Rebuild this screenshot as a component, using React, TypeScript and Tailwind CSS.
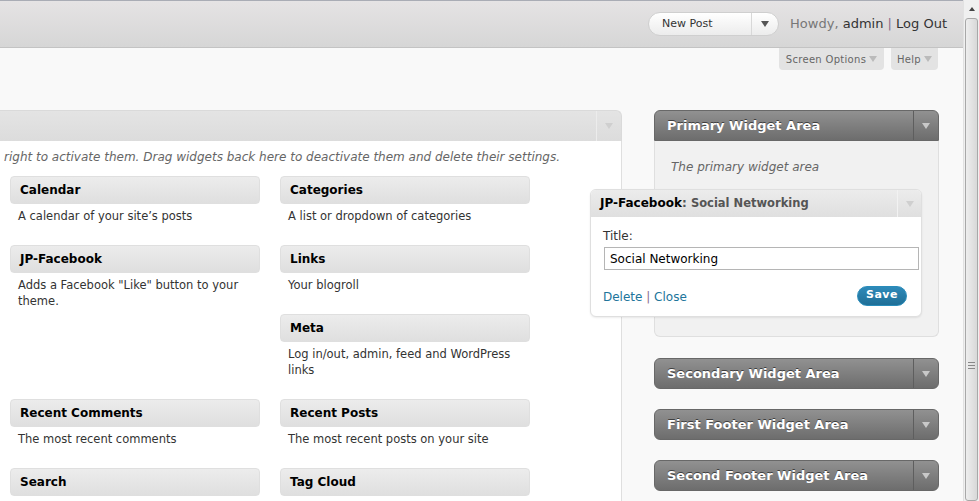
import React from "react";

const font = "font-['DejaVu_Sans','Verdana',sans-serif]";

function Arrow({ className = "" }: { className?: string }) {
  return (
    <svg viewBox="0 0 8 6" className={`w-[8px] h-[6px] ${className}`} fill="currentColor">
      <path d="M0 0h8L4 6z" />
    </svg>
  );
}

function Widget({ title, desc }: { title: string; desc?: string }) {
  return (
    <div className="w-[250px] mb-[21px]">
      <div className="h-[28px] rounded-[4px] border border-[#dfdfdf] bg-gradient-to-b from-[#ececec] to-[#dfdfdf] flex items-center pl-[9px] text-[12px] font-bold text-black">
        {title}
      </div>
      {desc && <p className="pt-[4px] pl-[8px] pr-[4px] text-[11.5px] leading-[16px] text-[#333]">{desc}</p>}
    </div>
  );
}

function DarkArea({ title, open = false }: { title: string; open?: boolean }) {
  return (
    <div
      className={`h-[31px] shrink-0 flex items-center bg-gradient-to-b from-[#919191] to-[#6d6d6d] border border-[#686868] ${
        open ? "rounded-t-[6px]" : "rounded-[6px]"
      }`}
    >
      <span className="flex-1 pl-[12px] text-[13px] font-bold text-white [text-shadow:0_-1px_0_#3f3f3f]">{title}</span>
      <span className="w-[25px] h-full border-l border-[#5e5e5e] flex items-center justify-center text-[#c8c8c8]">
        <Arrow />
      </span>
    </div>
  );
}

export default function App() {
  return (
    <div className={`relative flex w-[979px] h-[501px] overflow-hidden bg-[#f9f9f9] ${font}`}>
      <div className="flex-1 min-w-0 flex flex-col">
        {/* admin header */}
        <div className="h-[48px] shrink-0 border-t border-[#a9acb5] border-b border-b-[#c3c3c3] bg-gradient-to-b from-[#e5e3e4] to-[#d6d6d6] flex items-center justify-end pr-[16px]">
          <div className="h-[24px] w-[131px] rounded-full border border-[#cfcfcf] bg-gradient-to-b from-white to-[#ececec] flex items-center">
            <span className="flex-1 pl-[13px] text-[11px] text-[#333]">New Post</span>
            <span className="w-[27px] h-full border-l border-[#d8d8d8] flex items-center justify-center text-[#555]">
              <Arrow />
            </span>
          </div>
          <div className="ml-[11px] text-[13px] text-[#333]">
            <span className="text-[#777]">Howdy, </span>admin <span className="text-[#8a6b8a]">|</span> Log Out
          </div>
        </div>

        {/* screen options / help tabs */}
        <div className="shrink-0 flex justify-end gap-[7px] pr-[25px]">
          <div className="h-[22px] w-[105px] rounded-b-[4px] bg-[#e3e3e3] flex items-center justify-center gap-[3px] text-[10px] text-[#666] tracking-[0.3px]">
            Screen Options <Arrow className="text-[#bbb]" />
          </div>
          <div className="h-[22px] w-[47px] rounded-b-[4px] bg-[#e3e3e3] flex items-center justify-center gap-[3px] text-[10px] text-[#666] tracking-[0.3px]">
            Help <Arrow className="text-[#bbb]" />
          </div>
        </div>

        <div className="flex mt-[40px] flex-1 min-h-0">
          {/* available widgets */}
          <div className="w-[622px] shrink-0 flex flex-col">
            <div className="h-[31px] shrink-0 rounded-tr-[6px] border-t border-r border-[#dadada] bg-gradient-to-b from-[#e4e4e4] to-[#dcdcdc] flex justify-end">
              <span className="w-[25px] h-full border-l border-[#ececec] flex items-center justify-center text-[#cfcfcf]">
                <Arrow />
              </span>
            </div>
            <div className="flex-1 min-h-0 overflow-hidden bg-white border-r border-[#dfdfdf]">
              <p className="pt-[8px] pl-[4px] text-[12px] leading-[16px] italic text-[#666]">
                right to activate them. Drag widgets back here to deactivate them and delete their settings.
              </p>
              <div className="mt-[11px] pl-[10px] flex flex-col">
                <div className="flex gap-[20px]">
                  <Widget title="Calendar" desc="A calendar of your site’s posts" />
                  <Widget title="Categories" desc="A list or dropdown of categories" />
                </div>
                <div className="flex gap-[20px]">
                  <Widget title="JP-Facebook" desc={'Adds a Facebook "Like" button to your theme.'} />
                  <div className="flex flex-col">
                    <Widget title="Links" desc="Your blogroll" />
                    <Widget title="Meta" desc="Log in/out, admin, feed and WordPress links" />
                  </div>
                </div>
                <div className="flex gap-[20px]">
                  <Widget title="Recent Comments" desc="The most recent comments" />
                  <Widget title="Recent Posts" desc="The most recent posts on your site" />
                </div>
                <div className="flex gap-[20px]">
                  <Widget title="Search" />
                  <Widget title="Tag Cloud" />
                </div>
              </div>
            </div>
          </div>

          {/* sidebars */}
          <div className="ml-[32px] w-[285px] shrink-0 flex flex-col">
            <DarkArea title="Primary Widget Area" open />
            <div className="h-[196px] shrink-0 bg-[#f1f1f1] border border-t-0 border-[#dfdfdf] rounded-b-[6px] pt-[17px] pl-[16px] text-[12px] italic text-[#666]">
              The primary widget area
            </div>
            <div className="mt-[21px] flex flex-col gap-[20px]">
              <DarkArea title="Secondary Widget Area" />
              <DarkArea title="First Footer Widget Area" />
              <DarkArea title="Second Footer Widget Area" />
            </div>
          </div>
        </div>
      </div>

      {/* scrollbar */}
      <div className="w-[16px] shrink-0 bg-[#f0f0f0] border-l border-[#e2e2e2] flex flex-col items-center">
        <div className="h-[18px] shrink-0 flex items-center justify-center text-[#444]">
          <svg viewBox="0 0 6 4" className="w-[6px] h-[4px]" fill="currentColor">
            <path d="M0 4h6L3 0z" />
          </svg>
        </div>
        <div className="flex-1 w-[13px] rounded-[3px] border border-[#a8a8a8] bg-gradient-to-r from-[#eeeeee] to-[#d8d8d8] flex flex-col items-center pt-[343px] gap-[2px]">
          <div className="w-[7px] h-px bg-[#888]" />
          <div className="w-[7px] h-px bg-[#888]" />
          <div className="w-[7px] h-px bg-[#888]" />
        </div>
      </div>

      {/* widget being dragged */}
      <div className="absolute left-[590px] top-[189px] w-[332px] h-[128px] rounded-[6px] border border-[#dfdfdf] bg-white shadow-[0_1px_2px_rgba(0,0,0,0.08)] overflow-hidden">
        <div className="h-[27px] bg-gradient-to-b from-[#ececec] to-[#dfdfdf] flex items-center">
          <span className="flex-1 pl-[9px] text-[12px] font-bold text-black">
            JP-Facebook<span className="text-[#555]">: <span className="text-[11.5px]">Social Networking</span></span>
          </span>
          <span className="w-[24px] h-full border-l border-[#f2f2f2] flex items-center justify-center text-[#cfcfcf]">
            <Arrow />
          </span>
        </div>
        <div className="px-[12px] pt-[11px]">
          <div className="text-[12px] leading-[16px] text-[#333]">Title:</div>
          <div className="mt-[3px] ml-[1px] h-[23px] w-[315px] border border-[#b5b5b5] flex items-center pl-[5px] text-[12px] text-black">
            Social Networking
          </div>
          <div className="mt-[18px] flex items-center justify-between pr-[2px]">
            <span className="text-[12px] text-[#21759b]">
              Delete <span className="text-[#8a6b8a]">|</span> Close
            </span>
            <span className="-mt-[3px] h-[20px] w-[50px] rounded-full bg-gradient-to-b from-[#2e8ab9] to-[#1f6f97] border border-[#298cba] flex items-center justify-center text-[11px] font-bold text-white tracking-[0.5px]">
              Save
            </span>
          </div>
        </div>
      </div>
    </div>
  );
}
